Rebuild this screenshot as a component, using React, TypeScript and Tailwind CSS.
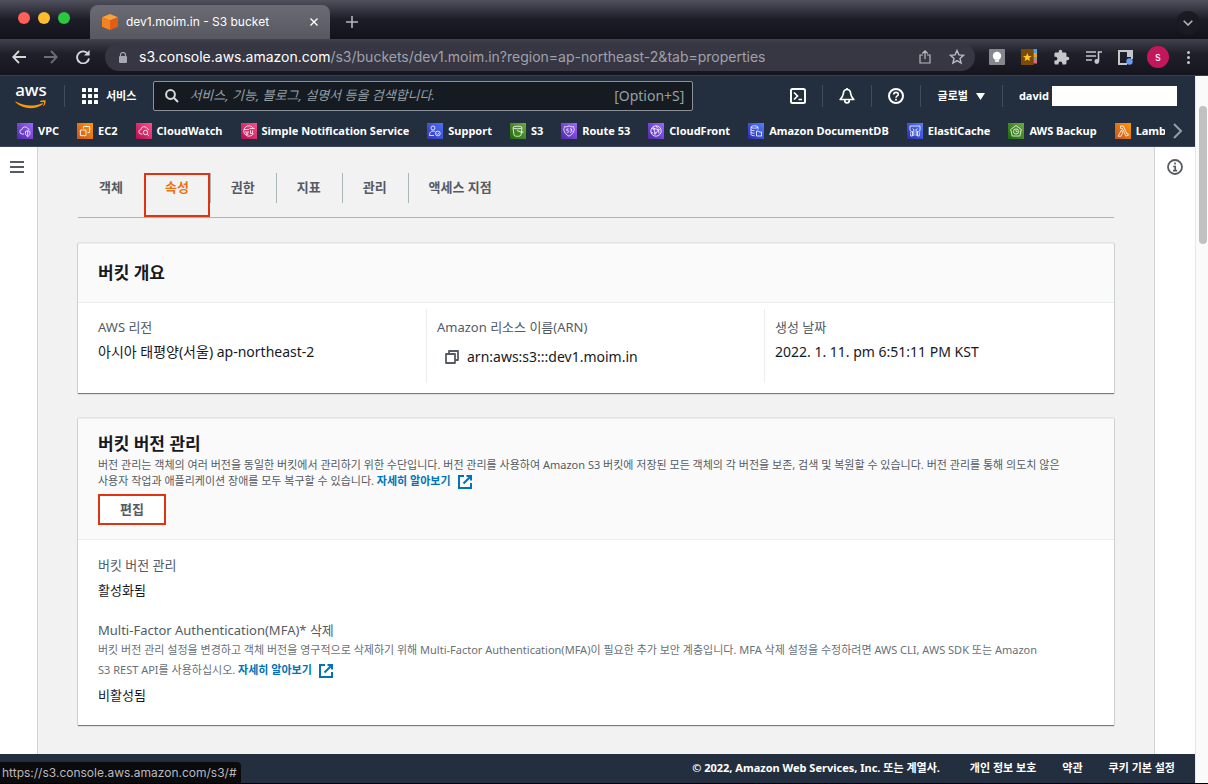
import type { ReactNode } from "react";

interface Bookmark {
  label: string;
  tile: string;
  icon: ReactNode;
}

const bookmarks: Bookmark[] = [
  {
    label: "VPC",
    tile: "from-[#4d27a8] to-[#a166ff]",
    icon: (
      <>
        <path d="M7 11H5.2a2.2 2.2 0 0 1-.3-4.4A3.2 3.2 0 0 1 11 5.8a2.2 2.2 0 0 1 1.500 1" />
        <path d="M8.500 8.500l2.200-.8 2.200.8v2c0 1.500-1 2.300-2.200 2.900-1.200-.6-2.200-1.400-2.200-2.900zM10.700 7.700v5.700" />
      </>
    ),
  },
  {
    label: "EC2",
    tile: "from-[#c8511b] to-[#ff9900]",
    icon: (
      <>
        <rect x="3.500" y="7" width="5.500" height="5.500" />
        <path d="M6.500 5.500V3.500h6v6H10.500M5 13.500v-1M7.500 13.500v-1M2.500 8.500h1M2.500 11h1M9 3.500v-1M13.500 6h-1" />
      </>
    ),
  },
  {
    label: "CloudWatch",
    tile: "from-[#b0084d] to-[#ff4f8b]",
    icon: (
      <>
        <path d="M6.500 11H5.200a2.200 2.200 0 0 1-.3-4.400A3.200 3.200 0 0 1 11 5.500a2 2 0 0 1 1.800 1.500" />
        <circle cx="9.500" cy="9.500" r="2.200" />
        <path d="M11.200 11.200l2 2" />
      </>
    ),
  },
  {
    label: "Simple Notification Service",
    tile: "from-[#b0084d] to-[#ff4f8b]",
    icon: (
      <>
        <path d="M12.500 5.500A5.200 5.200 0 1 0 12.500 10.500" />
        <path d="M3 6.500h5M4 9h4M8.500 5.500h5M9.500 7.500v3h2v-3" />
        <circle cx="6" cy="11" r="1" />
      </>
    ),
  },
  {
    label: "Support",
    tile: "from-[#3334b9] to-[#4d72f3]",
    icon: (
      <>
        <circle cx="6" cy="5" r="2" />
        <path d="M2.500 12.500c0-3 1.300-4.500 3.500-4.500 1 0 1.800.3 2.400.9M2.500 12.500h4.500" />
        <circle cx="10.800" cy="10.500" r="2.400" />
        <path d="M9.600 10.500l1 1 1.500-1.800" />
      </>
    ),
  },
  {
    label: "S3",
    tile: "from-[#1b660f] to-[#6cae3e]",
    icon: (
      <>
        <ellipse cx="7.500" cy="4.500" rx="4.500" ry="1.300" />
        <path d="M3 4.500l1 7.500c0 .8 1.600 1.300 3.500 1.300s3.500-.5 3.500-1.300l1-7.500M7 7.500l5 2c1.200.3 1.600-.6.500-1.300" />
      </>
    ),
  },
  {
    label: "Route 53",
    tile: "from-[#4d27a8] to-[#a166ff]",
    icon: (
      <>
        <path d="M3.500 3.500c1.500.6 3 .3 4.500-.8 1.500 1.100 3 1.400 4.500.8.300 1.500 1 2.300.5 4-.6 2.500-2 4-5 5.700-3-1.700-4.400-3.200-5-5.700-.5-1.700.2-2.500.5-4z" />
        <path d="M7.500 6H5.800v1.600c1.300-.2 1.900.2 1.900.9s-.9 1.200-2 .8M9 6h1.800L9.900 7.300c1.800.1 1.300 2.300-.9 2" />
      </>
    ),
  },
  {
    label: "CloudFront",
    tile: "from-[#4d27a8] to-[#a166ff]",
    icon: (
      <>
        <circle cx="8" cy="8" r="5.200" />
        <path d="M5.500 5.500l4.500 1M6 6l1 4M10.500 7l-3 3.500M10.500 7.500l.5 3M3 9l2 1M8 3l1.500 2" />
        <circle cx="5.500" cy="5.500" r=".8" />
        <circle cx="10.500" cy="6.800" r=".8" />
        <circle cx="7" cy="10.500" r=".8" />
      </>
    ),
  },
  {
    label: "Amazon DocumentDB",
    tile: "from-[#2e27ad] to-[#527fff]",
    icon: (
      <>
        <ellipse cx="6.500" cy="4" rx="3.500" ry="1.200" />
        <path d="M3 4v7.500c0 .8 1.500 1.200 3.500 1.200M10 4v2.500M3 6.500c0 .8 1.500 1.200 3.500 1.200M3 9c0 .8 1.500 1.200 3.500 1.200" />
        <path d="M8.500 8h2l.6 1H13.500v4h-5z" />
      </>
    ),
  },
  {
    label: "ElastiCache",
    tile: "from-[#2e27ad] to-[#527fff]",
    icon: (
      <path d="M3 3h10v4.500l-1.500.8.8 1.200v3.500h-1.800V8M3 3v4.500l1.500.8-.8 1.200v3.500h1.800V8M6.800 13V6M9.200 13V6M5.500 5.500l1.300 1.300M10.500 5.500L9.200 6.800" />
    ),
  },
  {
    label: "AWS Backup",
    tile: "from-[#1b660f] to-[#6cae3e]",
    icon: (
      <>
        <path d="M8 2.500l5.300 4-1.500 6.500H4.200L2.700 6.500z" />
        <circle cx="8" cy="8.500" r="2.600" />
        <path d="M8 7.200v1.500h1.500" />
      </>
    ),
  },
  {
    label: "Lambda",
    tile: "from-[#c8511b] to-[#ff9900]",
    icon: (
      <path d="M5.500 3h2.800l3.700 8 1-.3.500 1.400-2.600 1-3.500-7.700H5.500zM6.500 7l1.200 2.400-1.600 3.800H3z" />
    ),
  },
];

const tabs = ["객체", "속성", "권한", "지표", "관리", "액세스 지점"];

function ServiceTile({ tile, icon }: Omit<Bookmark, "label">) {
  return (
    <span className={`size-4 shrink-0 bg-linear-to-tr ${tile}`}>
      <svg
        viewBox="0 0 16 16"
        className="size-4 fill-none stroke-white"
        strokeWidth="0.8"
        strokeLinejoin="round"
      >
        {icon}
      </svg>
    </span>
  );
}

function BucketCube() {
  return (
    <svg viewBox="0 0 16 16" className="size-4 shrink-0">
      <path d="M8 0l8 3.200-8 3.300-8-3.300z" fill="#f9a13a" />
      <path d="M0 3.200l8 3.300V16l-8-3.200z" fill="#f58220" />
      <path d="M16 3.200L8 6.500V16l8-3.200z" fill="#e35d14" />
    </svg>
  );
}

function AwsLogo() {
  return (
    <a href="#" aria-label="aws" className="flex w-8 flex-col items-center text-white">
      <span className="text-[17px] leading-3 font-medium">aws</span>
      <svg viewBox="0 0 32 9" className="mt-1 h-[9px] w-8 fill-[#ff9900]">
        <path d="M.8 1.500C9 6.300 19 6.800 27.300 3.200c.8-.3 1.300.5.6 1C20 9.800 8.500 9.700.5 2.200c-.4-.4-.1-.9.3-.7z" />
        <path d="M25 1.200c1.600-1 5-1.200 5.500-.7.500.7-.2 4.200-1.800 5.600-.3.300-.6.100-.4-.3.400-1 1-3 .7-3.500-.4-.5-2.500-.4-3.700-.3-.400.1-.6-.5-.3-.8z" />
      </svg>
    </a>
  );
}

function LearnMore() {
  return (
    <a href="#" className="font-bold text-[#0073bb]">
      자세히 알아보기
      <svg
        viewBox="0 0 16 16"
        className="ml-1.5 inline-block size-4 fill-none stroke-[#0073bb] align-middle"
        strokeWidth="2"
      >
        <path d="M7 2H2v12h12V9" />
        <path d="M9.500 2H14v4.500M14 2L6.500 9.500" />
      </svg>
    </a>
  );
}

function TitleBar() {
  return (
    <div className="flex h-[39px] items-end bg-linear-to-b from-[#50515c] via-[#1d1d28] via-50% to-[#12121b]">
      <div className="flex gap-2 self-start pt-3 pl-[18px]">
        <span className="size-3 rounded-full bg-[#fe5f57]" />
        <span className="size-3 rounded-full bg-[#febc2e]" />
        <span className="size-3 rounded-full bg-[#28c840]" />
      </div>
      <div className="ml-5 flex h-[34px] w-60 items-center rounded-t-lg bg-linear-to-b from-[#6a6b73] to-[#575861] px-3 text-white">
        <BucketCube />
        <span className="ml-2 flex-1 text-xs">dev1.moim.in - S3 bucket</span>
        <button type="button" aria-label="탭 닫기">
          <svg viewBox="0 0 8 8" className="size-2 stroke-white" strokeWidth="1.400">
            <path d="M.5.5l7 7M7.500.5l-7 7" />
          </svg>
        </button>
      </div>
      <button type="button" aria-label="새 탭" className="ml-4 flex h-[34px] items-center">
        <svg viewBox="0 0 12 12" className="size-3 stroke-[#b5b6bb]" strokeWidth="1.600">
          <path d="M6 0v12M0 6h12" />
        </svg>
      </button>
      <button
        type="button"
        aria-label="탭 검색"
        className="mr-2 mb-1 ml-auto flex size-6 items-center justify-center rounded-full bg-[#1a1a22]"
      >
        <svg viewBox="0 0 10 6" className="h-1.5 w-2.5 fill-none stroke-[#b5b6bb]" strokeWidth="1.600">
          <path d="M.7.700L5 5l4.300-4.300" />
        </svg>
      </button>
    </div>
  );
}

function Toolbar() {
  return (
    <div className="flex h-[37px] items-center border-b border-[#3d3d45] bg-linear-to-b from-[#41424d] via-[#20202b] via-40% to-[#15151e] pr-[18px] pl-3">
      <button type="button" aria-label="뒤로">
        <svg viewBox="0 0 14 14" className="size-3.5 fill-none stroke-[#d5d6da]" strokeWidth="1.800">
          <path d="M14 7H1.500M7 1L1.200 7 7 13" />
        </svg>
      </button>
      <button type="button" aria-label="앞으로" className="ml-[18px]">
        <svg viewBox="0 0 14 14" className="size-3.5 fill-none stroke-[#6c6d76]" strokeWidth="1.800">
          <path d="M0 7h12.500M7 1l5.800 6L7 13" />
        </svg>
      </button>
      <button type="button" aria-label="새로고침" className="ml-[18px]">
        <svg viewBox="0 0 14 14" className="size-3.5 fill-none stroke-[#d5d6da]" strokeWidth="1.900">
          <path d="M12.200 4.200A6 6 0 1 0 13 8.500" />
          <path d="M13.600 0v5.500H8z" className="fill-[#d5d6da] stroke-none" />
        </svg>
      </button>
      <div className="ml-[15px] flex h-7 flex-1 items-center rounded-full bg-[#373743] pr-2.5 pl-3.5">
        <svg viewBox="0 0 8 11" className="h-[11px] w-2 shrink-0 fill-[#a5a6af]">
          <rect y="4" width="8" height="7" rx="1" />
          <path d="M1.500 4.500V3a2.500 2.500 0 0 1 5 0v1.500" className="fill-none stroke-[#a5a6af]" strokeWidth="1.200" />
        </svg>
        <p className="ml-3 flex-1 truncate text-sm text-[#a0a1ab]">
          <span className="text-white">s3.console.aws.amazon.com</span>
          /s3/buckets/dev1.moim.in?region=ap-northeast-2&amp;tab=properties
        </p>
        <button type="button" aria-label="공유">
          <svg viewBox="0 0 12 14" className="h-3.5 w-3 fill-none stroke-[#b9bac1]" strokeWidth="1.200">
            <path d="M4 5H1v8h10V5H8M6 9V1M3.300 3.500L6 .9l2.700 2.600" />
          </svg>
        </button>
        <button type="button" aria-label="북마크" className="ml-[18px]">
          <svg viewBox="0 0 16 16" className="size-4 fill-none stroke-[#b9bac1]" strokeWidth="1.400">
            <path d="M8 1.500l1.900 4.400 4.700.4-3.600 3.100 1.100 4.700L8 11.600l-4.100 2.500L5 9.400 1.400 6.300l4.700-.4z" />
          </svg>
        </button>
      </div>
      <div className="ml-3.5 flex items-center gap-4">
        <svg viewBox="0 0 16 16" className="size-4">
          <rect width="16" height="16" rx="1" fill="#85878c" />
          <circle cx="8" cy="7" r="4.200" fill="#fff" />
          <path d="M6 10h4v3H6z" fill="#e8e8e8" />
        </svg>
        <svg viewBox="0 0 16 16" className="size-4">
          <rect width="12.500" height="16" fill="#7a4a06" />
          <path d="M6.300 4l1.200 2.900 3.100.2-2.400 2 .8 3-2.700-1.700-2.700 1.700.8-3-2.400-2 3.100-.2z" fill="#ffc928" />
          <path d="M12.500 0H16v4h-3.500z" fill="#4aa3e8" />
          <path d="M12.500 4H16v4h-3.500z" fill="#f09a2c" />
          <path d="M12.500 8H16v3h-3.500z" fill="#52b788" />
          <path d="M12.500 11H16v3.500h-3.500z" fill="#e9668a" />
        </svg>
        <svg viewBox="0 0 24 24" className="size-[17px] fill-[#c6c7cb]">
          <path d="M20.500 11H19V7c0-1.100-.9-2-2-2h-4V3.500a2.500 2.500 0 0 0-5 0V5H4c-1.100 0-2 .9-2 2v3.800h1.500a2.700 2.700 0 0 1 0 5.400H2V20c0 1.100.9 2 2 2h3.800v-1.500a2.700 2.700 0 0 1 5.400 0V22H17c1.100 0 2-.9 2-2v-4h1.500a2.500 2.500 0 0 0 0-5z" />
        </svg>
        <svg viewBox="0 0 16 13" className="h-[13px] w-4 fill-none stroke-[#c6c7cb]" strokeWidth="1.600">
          <path d="M0 1h10M0 5h10M0 9h6M12.500 10V1H16" />
          <circle cx="10.800" cy="10.500" r="1.600" className="fill-[#c6c7cb]" />
        </svg>
        <svg viewBox="0 0 15 15" className="size-[15px] fill-none">
          <path d="M9 14H1V1h13v8" stroke="#c6c7cb" strokeWidth="2" />
          <path d="M9 1h5v6H9z" fill="#c6c7cb" />
          <circle cx="11.500" cy="11.500" r="3.200" fill="#669df6" />
        </svg>
        <span className="-mx-0.5 flex size-[22px] items-center justify-center rounded-full bg-[#c2185b] text-[11px] text-white">
          s
        </span>
        <button type="button" aria-label="Chrome 메뉴" className="ml-1 flex flex-col gap-0.5">
          <span className="size-[3px] rounded-full bg-[#c6c7cb]" />
          <span className="size-[3px] rounded-full bg-[#c6c7cb]" />
          <span className="size-[3px] rounded-full bg-[#c6c7cb]" />
        </button>
      </div>
    </div>
  );
}

function Divider() {
  return <span className="h-[22px] w-px shrink-0 bg-[#414d5c]" />;
}

function ServiceNav() {
  return (
    <div className="flex h-10 items-center gap-[17px] pr-[18px] pl-[15px] text-[11px] font-bold">
      <AwsLogo />
      <Divider />
      <button type="button" className="flex items-center gap-2 text-white">
        <svg viewBox="0 0 16 16" className="size-4 fill-white">
          {[0, 6, 12].map((y) =>
            [0, 6, 12].map((x) => <rect key={`${x}-${y}`} x={x} y={y} width="4" height="4" rx=".6" />),
          )}
        </svg>
        서비스
      </button>
      <label className="flex h-[30px] w-[540px] items-center gap-2.5 rounded-xs border border-[#8a929c] bg-[#161b22] pr-2 pl-[11px]">
        <svg viewBox="0 0 14 14" className="size-3.5 shrink-0 fill-none stroke-[#d5dbdb]" strokeWidth="2">
          <circle cx="5.500" cy="5.500" r="4.400" />
          <path d="M8.800 8.800L13 13" />
        </svg>
        <input
          type="search"
          aria-label="검색"
          placeholder="서비스, 기능, 블로그, 설명서 등을 검색합니다."
          className="min-w-0 flex-1 bg-transparent text-[13px] font-normal text-white outline-none placeholder:text-[#95a0a6] placeholder:italic"
        />
        <span className="text-sm font-normal text-[#95a0a6]">[Option+S]</span>
      </label>
      <div className="ml-auto flex items-center gap-4 text-white">
        <button type="button" aria-label="CloudShell">
          <svg viewBox="0 0 16 16" className="size-4 fill-none stroke-white" strokeWidth="2">
            <rect x="1" y="1" width="14" height="14" rx="1.500" />
            <path d="M4 4.500L7.500 8 4 11.500M8.500 11.500H12" strokeWidth="1.700" />
          </svg>
        </button>
        <Divider />
        <button type="button" aria-label="알림">
          <svg viewBox="0 0 16 16" className="size-4 fill-none stroke-white" strokeWidth="1.700" strokeLinejoin="round">
            <path d="M8 1.500c-2.500 0-3.500 1.800-3.700 4.200C4.100 8 3 9.500 1.200 11.500h13.600C13 9.500 11.900 8 11.700 5.700 11.500 3.300 10.500 1.500 8 1.500z" />
            <path d="M5.700 12c0 4 4.600 4 4.600 0M8 0v1.500" />
          </svg>
        </button>
        <Divider />
        <button type="button" aria-label="도움말">
          <svg viewBox="0 0 16 16" className="size-4 fill-none stroke-white" strokeWidth="2">
            <circle cx="8" cy="8" r="7" />
            <path d="M5.700 6.500C5.700 3.600 10.300 3.700 10.300 6.400 10.300 8 8 7.900 8 9.700" strokeWidth="1.600" />
            <path d="M8 10.800v1.700" strokeWidth="1.700" />
          </svg>
        </button>
        <Divider />
        <button type="button" className="flex items-center gap-2 px-px">
          글로벌
          <svg viewBox="0 0 9 7" className="h-[7px] w-[9px] fill-white">
            <path d="M0 0h9L4.500 7z" />
          </svg>
        </button>
        <Divider />
        <button type="button" className="flex items-center gap-[3px]">
          david
          <span className="h-5 w-[125px] bg-white" />
        </button>
      </div>
    </div>
  );
}

function BookmarkBar() {
  return (
    <div className="flex h-[30px] items-center pr-3 pl-[17px]">
      <nav className="flex min-w-0 flex-1 gap-[18px] overflow-hidden">
        {bookmarks.map((item) => (
          <a
            key={item.label}
            href="#"
            className="flex shrink-0 items-center gap-[5px] text-[11px] leading-4 font-bold text-white"
          >
            <ServiceTile tile={item.tile} icon={item.icon} />
            {item.label}
          </a>
        ))}
      </nav>
      <button type="button" aria-label="다음" className="ml-2">
        <svg viewBox="0 0 10 16" className="h-4 w-2.5 fill-none stroke-[#95a0a6]" strokeWidth="2">
          <path d="M1 1l7 7-7 7" />
        </svg>
      </button>
    </div>
  );
}

function Tabs() {
  return (
    <nav className="flex border-b border-[#aab7b8] pt-[26px] text-[13px] leading-5 font-bold">
      {tabs.map((tab, i) =>
        tab === "속성" ? (
          <a
            key={tab}
            href="#"
            className="h-11 border-2 border-[#df3312] px-[19px] pt-0.5 text-[#ec7211]"
          >
            {tab}
          </a>
        ) : (
          <a
            key={tab}
            href="#"
            className={`h-[30px] border-l pt-1 pr-[21px] pl-5 text-[#545b64] ${
              i > 1 ? "border-[#aab7b8]" : "border-transparent"
            }`}
          >
            {tab}
          </a>
        ),
      )}
    </nav>
  );
}

function Card({ header, children }: { header: ReactNode; children: ReactNode }) {
  return (
    <section className="mt-[25px] border-t border-[#eaeded] bg-white shadow-[0_1px_1px_0_rgba(0,28,36,0.5),0_0_1px_0_rgba(0,28,36,0.4)]">
      <div className="border-b border-[#eaeded] bg-[#fafafa] px-5">{header}</div>
      {children}
    </section>
  );
}

function BucketOverview() {
  return (
    <Card header={<h2 className="py-4 text-[17px] leading-[26px] font-bold">버킷 개요</h2>}>
      <dl className="grid grid-cols-[348fr_338fr_350fr] pt-1.5 pb-2.5 text-sm leading-5">
        <div className="px-5 pt-2 pb-4">
          <dt className="text-[13px] text-[#545b64]">AWS 리전</dt>
          <dd className="mt-[5px]">아시아 태평양(서울) ap-northeast-2</dd>
        </div>
        <div className="border-l border-[#eaeded] px-2.5 pt-2 pb-4">
          <dt className="text-[13px] text-[#545b64]">Amazon 리소스 이름(ARN)</dt>
          <dd className="mt-2.5 flex items-center gap-2 pl-2">
            <button type="button" aria-label="ARN 복사">
              <svg viewBox="0 0 14 14" className="size-3.5 fill-none stroke-[#545b64]" strokeWidth="1.800">
                <path d="M1 4h9v9H1zM4 4V1h9v9h-3" strokeLinejoin="round" />
              </svg>
            </button>
            arn:aws:s3:::dev1.moim.in
          </dd>
        </div>
        <div className="border-l border-[#eaeded] px-2.5 pt-2 pb-4">
          <dt className="text-[13px] text-[#545b64]">생성 날짜</dt>
          <dd className="mt-[5px]">2022. 1. 11. pm 6:51:11 PM KST</dd>
        </div>
      </dl>
    </Card>
  );
}

function BucketVersioning() {
  return (
    <Card
      header={
        <div className="pt-3 pb-3.5">
          <h2 className="text-[17px] leading-[26px] font-bold">버킷 버전 관리</h2>
          <p className="text-[11px] leading-4 text-[#545b64]">
            버전 관리는 객체의 여러 버전을 동일한 버킷에서 관리하기 위한 수단입니다. 버전 관리를 사용하여 Amazon S3
            버킷에 저장된 모든 객체의 각 버전을 보존, 검색 및 복원할 수 있습니다. 버전 관리를 통해 의도치 않은
            <br />
            사용자 작업과 애플리케이션 장애를 모두 복구할 수 있습니다. <LearnMore />
          </p>
          <button
            type="button"
            className="mt-1 h-[31px] border-2 border-[#df3312] bg-white px-5 text-[13px] font-bold text-[#545b64]"
          >
            편집
          </button>
        </div>
      }
    >
      <dl className="px-5 pt-[15px] pb-5 text-[13px] leading-5">
        <dt className="text-[#545b64]">버킷 버전 관리</dt>
        <dd className="mt-[5px]">활성화됨</dd>
        <dt className="mt-5 text-[#545b64]">
          Multi-Factor Authentication(MFA)* 삭제
          <p className="text-[11px] leading-5 text-[#687078]">
            버킷 버전 관리 설정을 변경하고 객체 버전을 영구적으로 삭제하기 위해 Multi-Factor Authentication(MFA)이
            필요한 추가 보안 계층입니다. MFA 삭제 설정을 수정하려면 AWS CLI, AWS SDK 또는 Amazon
            <br />
            S3 REST API를 사용하십시오. <LearnMore />
          </p>
        </dt>
        <dd className="mt-[5px]">비활성됨</dd>
      </dl>
    </Card>
  );
}

function Footer() {
  return (
    <footer className="flex h-[29px] shrink-0 items-center justify-end gap-[26px] bg-[#232f3e] pr-5 text-[11px] font-bold text-white">
      <span className="mr-1">© 2022, Amazon Web Services, Inc. 또는 계열사.</span>
      <a href="#">개인 정보 보호</a>
      <a href="#">약관</a>
      <a href="#">쿠키 기본 설정</a>
    </footer>
  );
}

function MenuIcon() {
  return (
    <svg viewBox="0 0 14 12" className="h-3 w-3.5 stroke-[#545b64]" strokeWidth="2">
      <path d="M0 1h14M0 6h14M0 11h14" />
    </svg>
  );
}

function InfoIcon() {
  return (
    <svg viewBox="0 0 16 16" className="size-4 fill-none stroke-[#545b64]">
      <circle cx="8" cy="8" r="7" strokeWidth="1.800" />
      <path d="M8 3.600v2M6.200 7.500H8.200v4M6 11.600h4.200" strokeWidth="1.700" />
    </svg>
  );
}

function App() {
  return (
    <div className="relative flex h-screen flex-col overflow-hidden border-b border-black bg-white font-['Noto_Sans','Noto_Sans_CJK_KR',sans-serif] text-[#16191f]">
      <div className="shrink-0 font-['Inter','Noto_Sans_CJK_KR',sans-serif]">
        <TitleBar />
        <Toolbar />
      </div>

      <div className="flex min-h-0 flex-1">
        <div className="flex min-w-0 flex-1 flex-col">
          <header className="shrink-0 border-b border-[#3b4757] bg-[#232f3e]">
            <ServiceNav />
            <BookmarkBar />
          </header>

          <div className="flex min-h-0 flex-1">
            <aside className="w-[38px] shrink-0 border-r border-[#d0d3d6] bg-white">
              <button type="button" aria-label="메뉴 열기" className="mt-3.5 ml-2.5 block">
                <MenuIcon />
              </button>
            </aside>
            <main className="min-w-0 flex-1 overflow-hidden bg-[#f2f2f2] px-10">
              <Tabs />
              <BucketOverview />
              <BucketVersioning />
            </main>
            <aside className="w-[41px] shrink-0 border-l border-[#d0d3d6] bg-white">
              <button type="button" aria-label="정보" className="mt-3 ml-3 block">
                <InfoIcon />
              </button>
            </aside>
          </div>

          <Footer />
        </div>

        <div className="w-[13px] shrink-0 border-l border-[#e8e8e8] bg-[#fafafa] pt-[30px] pr-px pl-[3px]">
          <div className="h-[138px] rounded-full bg-[#c1c1c1]" />
        </div>
      </div>

      <div className="absolute bottom-0 left-0 flex h-[21px] items-center rounded-tr-sm bg-[#0b0b0d] pr-1 pl-0.5 font-['Inter',sans-serif] text-xs text-[#b8b9bd]">
        https://s3.console.aws.amazon.com/s3/#
      </div>
    </div>
  );
}

export default App;
